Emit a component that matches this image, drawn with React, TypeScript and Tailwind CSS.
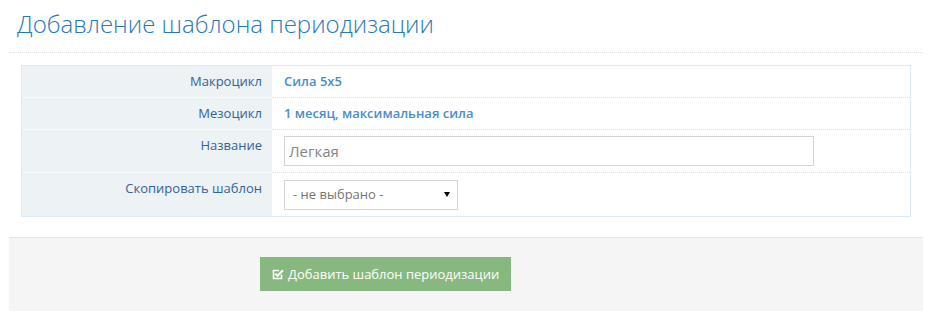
import React from "react";

const rowName = "w-[250px] shrink-0 bg-[#edf3f4] text-[#336199] text-right pr-[10px] pl-1 py-[6px] leading-[19px]";

const CheckIcon = () => (
  <svg width="12" height="12" viewBox="0 0 12 12" className="shrink-0">
    <path d="M9.5 6.5V10.5H1.5V2.5H7" fill="none" stroke="currentColor" strokeWidth="1.6" />
    <path d="M3.2 5.6L5.4 7.8L11 2.2" fill="none" stroke="currentColor" strokeWidth="2" />
  </svg>
);

export default function App() {
  return (
    <div className="min-h-[320px] bg-white pl-[9px] pr-[12px] text-[13px] font-['Open_Sans',sans-serif]">
      {/* Page header */}
      <div className="pt-[11px] pb-[15px] border-b border-dotted border-[#e2e2e2] mb-[12px]">
        <h1 className="ml-[8px] text-[24px] leading-[26px] font-light text-[#2679b5]">
          Добавление шаблона периодизации
        </h1>
      </div>

      {/* Info table */}
      <div className="mx-[12px] border border-[#dcebf7]">
        <div className="flex">
          <div className={rowName}>Макроцикл</div>
          <div className="flex-1 pl-[12px] py-[6px] leading-[19px] font-semibold text-[#478fca]">Сила 5x5</div>
        </div>
        <div className="flex">
          <div className={`${rowName} border-t border-[#f7fbff]`}>Мезоцикл</div>
          <div className="flex-1 pl-[12px] py-[6px] leading-[19px] font-semibold text-[#478fca] border-t border-dotted border-[#d5e4f1]">
            1 месяц, максимальная сила
          </div>
        </div>
        <div className="flex">
          <div className={`${rowName} border-t border-[#f7fbff]`}>Название</div>
          <div className="flex-1 pl-[12px] py-[6px] border-t border-dotted border-[#d5e4f1]">
            <input
              defaultValue="Легкая"
              className="block w-[530px] h-[30px] border border-[#d5d5d5] px-[4px] text-[15px] text-[#858585] outline-none"
            />
          </div>
        </div>
        <div className="flex">
          <div className={`${rowName} border-t border-[#f7fbff]`}>Скопировать шаблон</div>
          <div className="flex-1 pl-[12px] py-[6px] border-t border-dotted border-[#d5e4f1]">
            <div className="relative w-[174px] mt-px">
              <select className="block w-full h-[30px] appearance-none border border-[#d5d5d5] bg-white pl-[8px] text-[13px] text-[#7a7370] outline-none">
                <option>- не выбрано -</option>
              </select>
              <span className="pointer-events-none absolute right-[8px] top-[12px] w-0 h-0 border-l-[3px] border-r-[3px] border-t-[5px] border-l-transparent border-r-transparent border-t-black" />
            </div>
          </div>
        </div>
      </div>

      {/* Form actions */}
      <div className="mt-[20px] bg-[#f5f5f5] border-t border-[#e5e5e5] pt-[19px] pb-[20px] pl-[251px]">
        <button className="flex items-center gap-[4px] h-[34px] px-[12px] bg-[#87b87f] text-white text-[13px] leading-[20px]">
          <CheckIcon />
          Добавить шаблон периодизации
        </button>
      </div>
    </div>
  );
}
